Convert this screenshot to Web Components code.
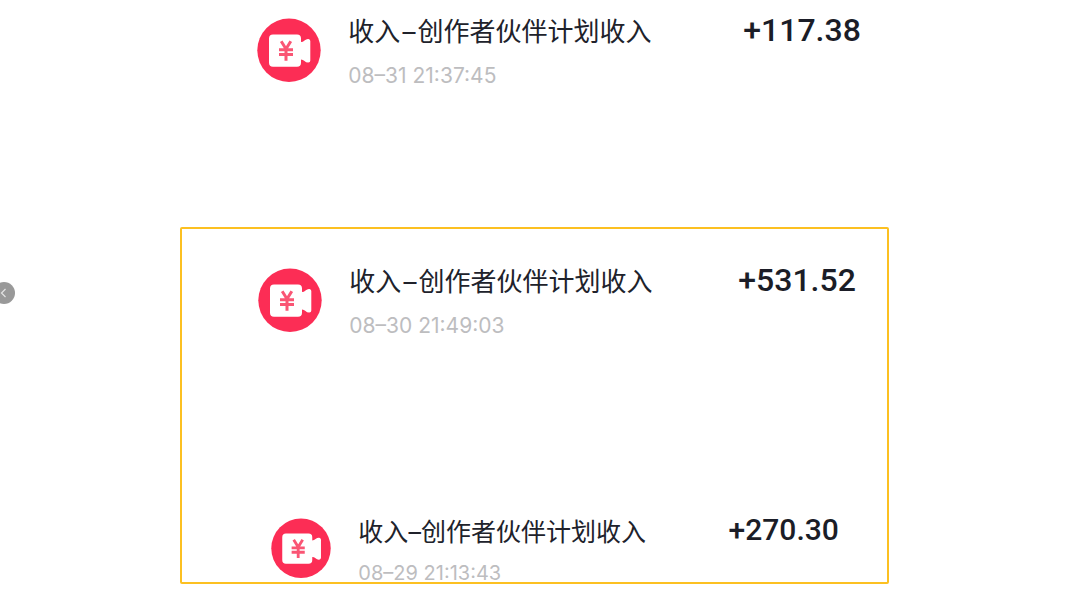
<!DOCTYPE html>
<html lang="zh-CN">
<head>
<meta charset="utf-8">
<meta name="viewport" content="width=device-width, initial-scale=1">
<title>收入明细</title>
<style>
html,body{margin:0;background:#fff}
</style>
</head>
<body>
<income-page>
  <income-row time="08–31 21:37:45" amount="+117.38">收入<span>–</span>创作者伙伴计划收入</income-row>
  <income-frame slot="framed">
    <income-row time="08–30 21:49:03" amount="+531.52">收入<span>–</span>创作者伙伴计划收入</income-row>
    <income-row size="small" time="08–29 21:13:43" amount="+270.30">收入<span>–</span>创作者伙伴计划收入</income-row>
  </income-frame>
</income-page>
<script>
class CameraBadge extends HTMLElement {
  constructor() {
    super();
    this.attachShadow({mode: 'open'}).innerHTML = `
      <style>
        :host{display:block;flex:none}
        svg{display:block;width:100%;height:auto}
      </style>
      <svg viewBox="0 0 64 64" aria-hidden="true">
        <circle cx="32" cy="32.300" r="31.700" fill="#fc2d55"/>
        <path d="M16 16.500H40Q44 16.500 44 20.500V24Q46 24 47.500 22.500Q49.500 20.700 51.500 21Q53.300 21.400 53.300 23V42.500Q53.300 44.300 51.300 44.500Q49 44.600 47.500 43Q46 41.500 44 41.500V44.800Q44 48.800 40 48.800H16Q12 48.800 12 44.800V20.500Q12 16.500 16 16.500Z" fill="#fff"/>
        <path d="M24.200 23.200L29 31L33.800 23.200M29 30.500V42.700M22 31.800H36M22 36.500H36" fill="none" stroke="#fa5574" stroke-width="3"/>
      </svg>`;
  }
}
customElements.define('camera-badge', CameraBadge);

class IncomeRow extends HTMLElement {
  constructor() {
    super();
    this.attachShadow({mode: 'open'}).innerHTML = `
      <style>
        :host{
          display:flex;align-items:flex-start;
          padding:0 var(--end,28px) 0 var(--start,77px);
          --title:26px;--time:21px;--amount:32px;--badge:64px;--dash:2px;--lead:17px;
        }
        :host([size="small"]){
          padding:0 48px 0 89px;
          --title:25px;--time:20px;--amount:30px;--badge:60px;--dash:0;--lead:14px;
        }
        camera-badge{width:var(--badge);margin:4px 27px 0 0}
        .text{flex:1;min-width:0;white-space:nowrap}
        .title{
          margin:0;font:400 var(--title)/36px Inter,"Noto Sans CJK SC",sans-serif;
          color:#20222b;
        }
        ::slotted(span){margin:0 var(--dash)}
        time{
          display:block;margin-top:var(--lead);
          font:400 var(--time)/18px Inter,sans-serif;color:#bdbdbf;
        }
        .amount{
          flex:none;font:500 var(--amount)/32px Roboto,sans-serif;color:#1b1d27;
        }
      </style>
      <camera-badge></camera-badge>
      <div class="text">
        <p class="title"><slot></slot></p>
        <time></time>
      </div>
      <span class="amount"></span>`;
  }
  connectedCallback() {
    this.shadowRoot.querySelector('time').textContent = this.getAttribute('time');
    this.shadowRoot.querySelector('.amount').textContent = this.getAttribute('amount');
  }
}
customElements.define('income-row', IncomeRow);

class IncomeFrame extends HTMLElement {
  constructor() {
    super();
    this.attachShadow({mode: 'open'}).innerHTML = `
      <style>
        :host{
          display:flex;flex-direction:column;gap:179px;
          border:2px solid #fcc021;border-radius:2px;
          padding-top:35px;
          --start:76px;--end:31px;
        }
      </style>
      <slot></slot>`;
  }
}
customElements.define('income-frame', IncomeFrame);

class IncomePage extends HTMLElement {
  constructor() {
    super();
    this.attachShadow({mode: 'open'}).innerHTML = `
      <style>
        :host{display:block;position:relative}
        main{
          display:flex;flex-direction:column;gap:142px;
          padding:14px 17.700% 8px 16.700%;
        }
        button{
          position:absolute;left:-7px;top:282px;
          width:22px;height:22px;padding:0;border:0;border-radius:50%;
          background:#999;
        }
        button svg{display:block;width:22px;height:22px}
      </style>
      <main>
        <slot></slot>
        <slot name="framed"></slot>
      </main>
      <button type="button" aria-label="上一张">
        <svg viewBox="0 0 22 22" aria-hidden="true"><path d="M12.500 7L8.500 11L12.500 15" fill="none" stroke="#e4e4e4" stroke-width="1.200"/></svg>
      </button>`;
  }
}
customElements.define('income-page', IncomePage);
</script>
</body>
</html>
